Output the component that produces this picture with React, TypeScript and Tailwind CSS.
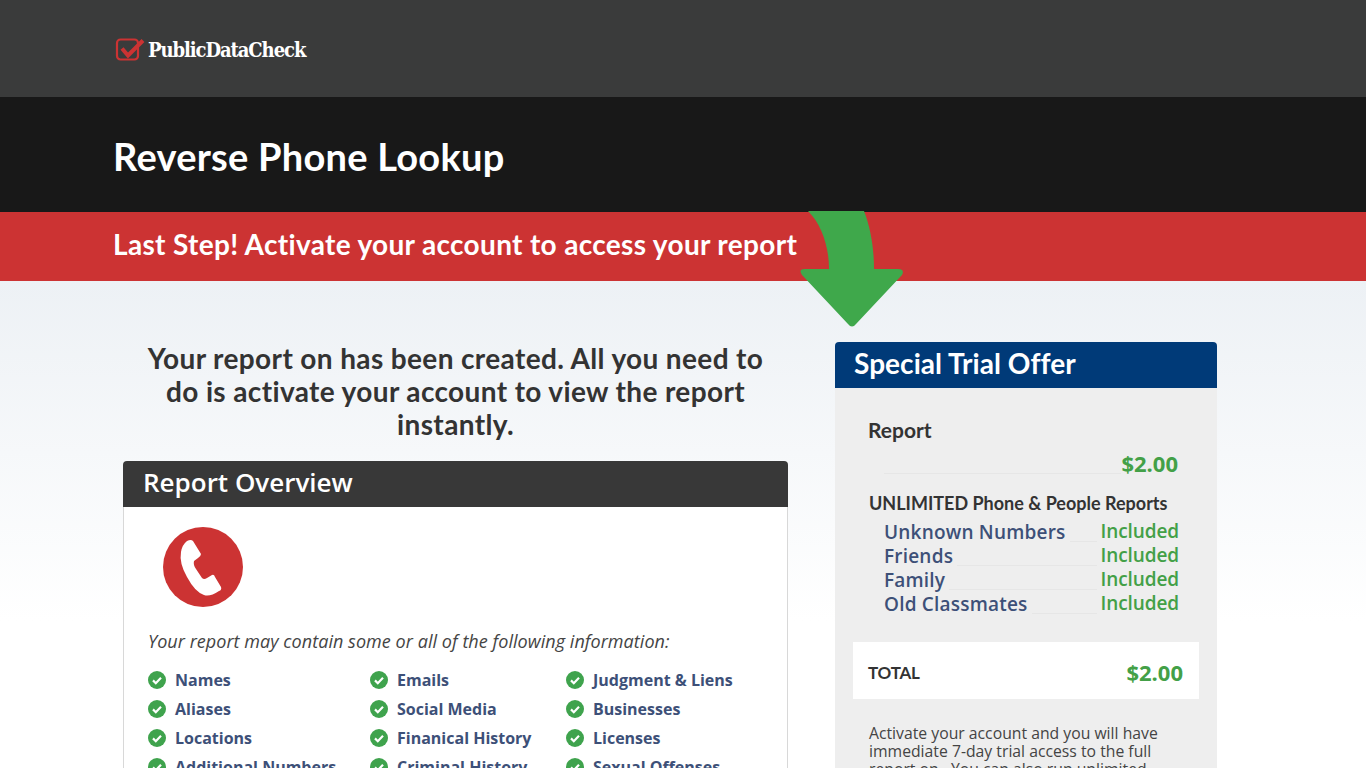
const included = ['Unknown Numbers', 'Friends', 'Family', 'Old Classmates'];

const columns = [
  { width: 'w-[222px]', items: ['Names', 'Aliases', 'Locations', 'Additional Numbers'] },
  { width: 'w-[196px]', items: ['Emails', 'Social Media', 'Finanical History', 'Criminal History'] },
  { width: 'w-[190px]', items: ['Judgment & Liens', 'Businesses', 'Licenses', 'Sexual Offenses'] },
];

const heading = "font-['Lato','Open_Sans',sans-serif]";

function CheckDot() {
  return (
    <svg viewBox="0 0 18 18" className="w-[18px] h-[18px] shrink-0 mr-[9px]">
      <circle cx="9" cy="9" r="9" fill="#3fa34d" />
      <path d="M5 9.4l2.8 2.8L13 6.8" fill="none" stroke="#fff" strokeWidth="2.2" />
    </svg>
  );
}

function Logo() {
  return (
    <div className="flex items-center">
      <svg viewBox="0 0 30 26" className="w-[30px] h-[26px] ml-[2px] mr-[3px]">
        <rect x="2" y="3.5" width="21" height="20" rx="3.5" fill="none" stroke="#cc3333" strokeWidth="2.2" />
        <path d="M7 12.5l6 7L28 4.5" fill="none" stroke="#cc3333" strokeWidth="4" />
      </svg>
      <span className="pt-[2px] font-['DejaVu_Serif_Condensed','DejaVu_Serif',serif] font-bold text-[20px] tracking-[-1.07px] text-white">PublicDataCheck</span>
    </div>
  );
}

function Arrow() {
  return (
    <svg viewBox="0 0 103 117" className="absolute left-[687px] top-[-1px] w-[103px] h-[117px] z-10">
      <path
        d="M8 0H64C71 18 74 38 74 58H98Q105 58 102 64L56 113Q52 118 48 113L2 64Q-2 58 5 58H29C29 36 22 14 8 0Z"
        fill="#3fa84b"
      />
    </svg>
  );
}

export default function App() {
  return (
    <div className="h-[768px] overflow-hidden font-['Open_Sans',sans-serif]">
      <header className="h-[97px] bg-[#3a3b3b] flex items-center">
        <div className="w-[1140px] mx-auto">
          <Logo />
        </div>
      </header>

      <div className="h-[115px] bg-[#181818] flex items-center">
        <h1 className={`w-[1140px] mx-auto pt-[4px] text-[38px] tracking-[0.25px] font-bold text-white ${heading}`}>Reverse Phone Lookup</h1>
      </div>

      <div className="h-[69px] bg-[#cc3333] flex items-center">
        <div className="w-[1140px] mx-auto relative h-full flex items-center">
          <h2 className={`pb-[6px] text-[28px] tracking-[0.33px] font-bold text-white ${heading}`}>Last Step! Activate your account to access your report</h2>
          <Arrow />
        </div>
      </div>

      <div className="h-[487px] bg-white bg-gradient-to-b from-[#edf1f5] to-white bg-[length:100%_340px] bg-no-repeat">
        <main className="w-[1140px] mx-auto pl-[10px] pt-[61px] flex items-start gap-[47px]">
          <section className="w-[665px]">
            <p className={`px-[15px] text-[28px] tracking-[0.37px] leading-[33px] font-bold text-[#333] text-center ${heading}`}>
              Your report on has been created. All you need to do is activate your account to view the report instantly.
            </p>

            <div className="mt-[20px] h-[46px] rounded-t-[4px] bg-[#383838] flex items-center pl-[20px] pb-[4px]">
              <h3 className="text-[26px] font-semibold text-white">Report Overview</h3>
            </div>
            <div className="bg-white border border-t-0 border-[#d8d8d8] pl-[24px] pt-[20px] pb-[20px]">
              <div className="w-[80px] h-[80px] ml-[15px] rounded-full bg-[#cc3333]">
                <svg viewBox="0 0 80 80" className="w-[80px] h-[80px]">
                  <path
                    d="M24 14Q28 12 30 14L38 27Q38 29 35 31L31 34Q30 38 33 42L39 51Q41 53 44 51L49 48Q51 47 52 50L58 60Q59 63 56 64Q47 70 41 68Q32 65 24 50Q16 36 18 25Q19 18 24 14Z"
                    fill="#fff"
                  />
                </svg>
              </div>
              <p className="mt-[22px] text-[18px] tracking-[0.05px] italic leading-[25px] text-[#444]">
                Your report may contain some or all of the following information:
              </p>
              <div className="mt-[11px] flex">
                {columns.map((col) => (
                  <ul key={col.items[0]} className={col.width}>
                    {col.items.map((item) => (
                      <li key={item} className="h-[29px] flex items-center text-[16px] font-bold text-[#3d5078]">
                        <CheckDot />
                        {item}
                      </li>
                    ))}
                  </ul>
                ))}
              </div>
            </div>
          </section>

          <aside className="w-[382px]">
            <div className="h-[46px] rounded-t-[4px] bg-[#003a78] flex items-center pl-[19px] pb-[4px]">
              <h3 className={`text-[28px] tracking-[0.05px] font-bold text-white ${heading}`}>Special Trial Offer</h3>
            </div>
            <div className="bg-[#eeeeee] px-[18px] pt-[29px] pb-[20px]">
              <div className="pl-[16px] pr-[21px]">
                <div className={`-ml-px text-[21px] leading-[26px] font-bold text-[#333] ${heading}`}>Report</div>
                <div className="mt-[6px] h-[28px] flex items-end pl-[15px]">
                  <div className="flex-1 border-b border-[#e6e6e6] mb-[3px]" />
                  <span className="text-[22px] leading-[28px] font-bold text-[#43a047]">$2.00</span>
                </div>
                <div className={`mt-[14px] text-[18px] leading-[24px] font-bold text-[#333] ${heading}`}>UNLIMITED Phone &amp; People Reports</div>
                <ul className="mt-[5px] pl-[15px]">
                  {included.map((name) => (
                    <li key={name} className="h-[24px] flex items-end text-[19px] leading-[24px] font-semibold">
                      <span className="text-[#3d5078] tracking-[0.2px]">{name}</span>
                      <span className="flex-1 border-b border-[#e6e6e6] mx-[4px] mb-[2px]" />
                      <span className="text-[#43a047] tracking-[-0.1px] -mr-px -translate-y-px">Included</span>
                    </li>
                  ))}
                </ul>
              </div>

              <div className="mt-[26px] h-[57px] bg-white flex items-center justify-between pl-[15px] pr-[16px] pt-[4px]">
                <span className={`text-[17px] tracking-[-0.2px] font-bold text-[#333] ${heading}`}>TOTAL</span>
                <span className="text-[22px] font-bold text-[#43a047]">$2.00</span>
              </div>

              <p className="mt-[25px] pl-[16px] pr-[20px] text-[15.75px] leading-[18px] text-[#444]">
                Activate your account and you will have immediate 7-day trial access to the full report on . You can also run unlimited
              </p>
            </div>
          </aside>
        </main>
      </div>
    </div>
  );
}
